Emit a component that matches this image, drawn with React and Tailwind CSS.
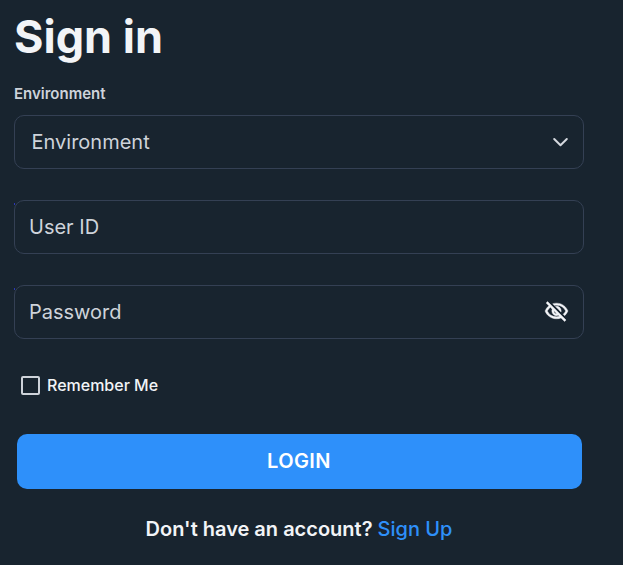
import { MdOutlineVisibilityOff } from "react-icons/md";

const fieldClass =
  "relative flex h-[54px] w-[570px] items-center rounded-[10px] border border-[#344054] text-[20px] leading-6 text-[#ced3da]";

const Chevron = () => (
  <svg className="h-5 w-5" viewBox="0 0 20 20" fill="none" stroke="#d5d9df" strokeWidth="2" strokeLinecap="round" strokeLinejoin="round">
    <path d="M3.2 7 9.5 13.2 15.8 7" />
  </svg>
);

const CornerMark = () => <span className="absolute -left-px top-[2px] h-[2px] w-px bg-[#2c38b8]" />;

const App = () => {
  return (
    <div className="h-[565px] w-[623px] overflow-hidden bg-[#18242f] pl-[14px] font-['Inter',sans-serif]">
      <h1 className="pt-2 text-[45px] font-bold leading-[58px] text-[#f2f4f7]">Sign in</h1>

      <form onSubmit={(e) => e.preventDefault()}>
        <label className="mt-[18px] block text-[15px] font-semibold leading-5 text-[#ced3da]">
          Environment
        </label>

        <div className={`${fieldClass} mt-[11px] justify-between pl-[16.5px] pr-[12px]`}>
          <span>Environment</span>
          <Chevron />
        </div>

        <div className={`${fieldClass} mt-[31px] px-[14px]`}>
          <CornerMark />
          User ID
        </div>

        <div className={`${fieldClass} mt-[31px] justify-between pl-[14px] pr-[14px]`}>
          <CornerMark />
          <span>Password</span>
          <MdOutlineVisibilityOff className="mb-px h-[25px] w-[25px] text-[#f2f4f7] [&_path:last-child]:stroke-[#f2f4f7] [&_path:last-child]:stroke-[0.4]" />
        </div>

        {/* Remember me */}
        <div className="mt-9 flex h-5 items-center gap-[7px] pl-[7px]">
          <span className="h-[19px] w-[19px] rounded-[2px] border-2 border-[#ced3da]" />
          <span className="text-[16px] font-medium text-[#f2f4f7]">Remember Me</span>
        </div>

        <button className="ml-[3px] mt-[39px] h-[55px] w-[565px] rounded-[10px] bg-[#2e90fa] pb-[2px] pr-px text-[20px] font-semibold tracking-[0.4px] text-white">
          LOGIN
        </button>
      </form>

      <p className="mt-[26px] w-[570px] text-center text-[20px] font-semibold leading-7 text-[#f2f4f7]">
        Don't have an account? <a className="font-medium text-[#2e90fa]">Sign Up</a>
      </p>
    </div>
  );
};

export default App;
